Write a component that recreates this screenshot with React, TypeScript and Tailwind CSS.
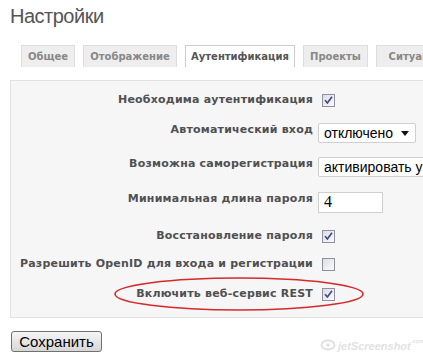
import React from "react";

function Check({ checked }: { checked: boolean }) {
  return (
    <div className="ml-[4px] w-[13px] h-[13px] border border-[#8f8f9f] bg-gradient-to-br from-[#dcdce6] to-[#fbfbfd] flex items-center justify-center">
      {checked && (
        <svg width="9" height="9" viewBox="0 0 9 9">
          <path d="M1 4.2 L3.4 7 L8 0.8" fill="none" stroke="#3f4a8a" strokeWidth="1.7" />
        </svg>
      )}
    </div>
  );
}

function Row({
  label,
  h,
  lift,
  children,
}: {
  label: string;
  h: string;
  lift?: boolean;
  children: React.ReactNode;
}) {
  return (
    <div className={`flex items-center ${h}`}>
      <div
        className={`w-[302px] shrink-0 text-right text-[11px] tracking-[0.2px] font-bold text-[#505050] whitespace-nowrap ${
          lift ? "mb-[6px]" : ""
        }`}
      >
        {label}
      </div>
      <div className="ml-[5px] flex items-center">{children}</div>
    </div>
  );
}

export default function App() {
  const tabs = [
    { t: "Общее", w: "w-[54px]" },
    { t: "Отображение", w: "w-[94px]" },
    { t: "Аутентификация", w: "w-[110px]", active: true },
    { t: "Проекты", w: "w-[65px]" },
    { t: "Ситуации", w: "w-[80px]" },
  ];
  return (
    <div className="w-[423px] h-[358px] overflow-hidden bg-white relative font-['DejaVu_Sans',Verdana,sans-serif]">
      <h2 className="pl-[10px] pt-[3px] text-[20px] leading-[26px] tracking-[-0.5px] text-[#555] font-['Liberation_Sans',Arial,sans-serif]">
        Настройки
      </h2>
      <div className="flex gap-2 pl-[21px] mt-[16px] h-[22px]">
        {tabs.map((tab) => (
          <div
            key={tab.t}
            className={`${tab.w} shrink-0 h-[22px] flex items-center justify-center text-[10px] font-bold border-t border-l border-r whitespace-nowrap overflow-hidden ${
              tab.active
                ? "bg-white border-[#cccccc] text-[#555]"
                : "bg-[#eeeeee] border-[#dddddd] text-[#888]"
            }`}
          >
            {tab.t}
          </div>
        ))}
      </div>
      <div className="ml-[10px] mt-[13px] w-[460px] border border-[#e2e2e2] bg-[#f6f6f6] pt-[3px] pb-[5px]">
        <Row label="Необходима аутентификация" h="h-[32px]">
          <Check checked />
        </Row>
        <Row label="Автоматический вход" h="h-[34px]" lift>
          <div className="w-[98px] h-[20px] bg-white border border-[#cfcfcf] rounded-[2px] flex items-center justify-between pl-[5px] pr-[6px] text-[14px] text-black font-['Liberation_Sans',Arial,sans-serif]">
            <span>отключено</span>
            <svg width="8" height="5" viewBox="0 0 8 5">
              <path d="M0 0 H8 L4 5 Z" fill="#111" />
            </svg>
          </div>
        </Row>
        <Row label="Возможна саморегистрация" h="h-[34px]" lift>
          <div className="w-[140px] h-[20px] bg-white border border-[#cfcfcf] rounded-[2px] flex items-center pl-[5px] text-[14px] text-black whitespace-nowrap font-['Liberation_Sans',Arial,sans-serif]">
            активировать учётные записи
          </div>
        </Row>
        <Row label="Минимальная длина пароля" h="h-[36px]" lift>
          <div className="w-[65px] h-[21px] bg-white border border-[#cfcfcf] flex items-center pl-[5px] text-[16px] text-black font-['Liberation_Serif',serif]">
            4
          </div>
        </Row>
        <Row label="Восстановление пароля" h="h-[32px]">
          <Check checked />
        </Row>
        <Row label="Разрешить OpenID для входа и регистрации" h="h-[24px]">
          <Check checked={false} />
        </Row>
        <Row label="Включить веб-сервис REST" h="h-[36px]">
          <Check checked />
        </Row>
      </div>
      <div className="ml-[11px] mt-[12px]">
        <button className="w-[91px] h-[21px] border border-[#707070] rounded-[3px] bg-gradient-to-b from-[#f6f6f6] to-[#d6d6d6] text-[15px] text-black font-['Liberation_Sans',Arial,sans-serif] leading-none">
          Сохранить
        </button>
      </div>
      <svg className="absolute left-0 top-0 pointer-events-none" width="423" height="358">
        <ellipse cx="239" cy="294" rx="124" ry="16" fill="none" stroke="#d42a2a" strokeWidth="1.6" />
      </svg>
      <div className="absolute left-[320px] top-[338px] flex items-end text-[#e2e2e2] italic font-bold font-['Liberation_Sans',Arial,sans-serif]">
        <svg width="16" height="12" viewBox="0 0 16 12" className="mb-[1px]">
          <ellipse cx="8" cy="6" rx="6.5" ry="4.5" fill="none" stroke="#e0e0e0" strokeWidth="1.8" />
          <circle cx="8" cy="6" r="1.8" fill="#e0e0e0" />
        </svg>
        <span className="text-[11px] leading-none ml-[2px]">jetScreenshot</span>
        <span className="text-[6px] leading-none mb-[8px]">.com</span>
      </div>
    </div>
  );
}
